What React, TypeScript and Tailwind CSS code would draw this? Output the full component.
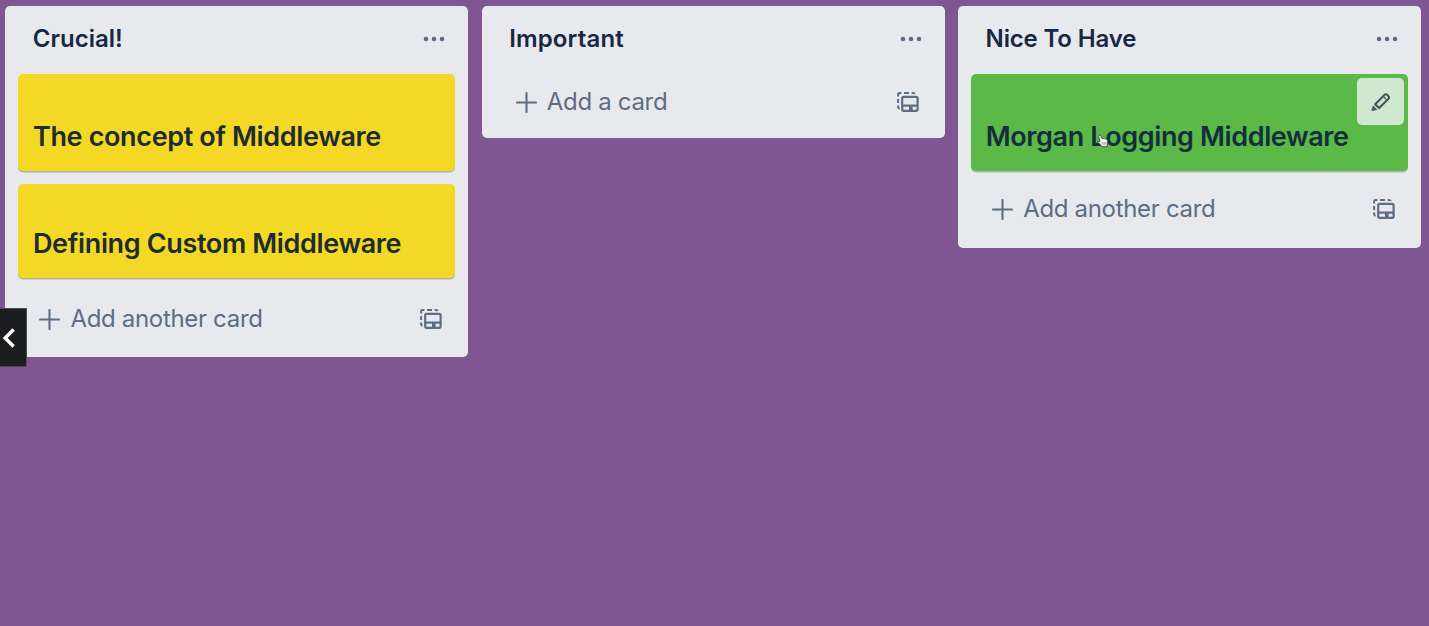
import type { ReactNode } from "react";

function Dots() {
  return (
    <svg width="22" height="6" viewBox="0 0 22 6" fill="#5e6c84" aria-hidden="true">
      <circle cx="3" cy="3" r="2.3" />
      <circle cx="11" cy="3" r="2.3" />
      <circle cx="19" cy="3" r="2.3" />
    </svg>
  );
}

function TemplateIcon() {
  return (
    <svg width="22" height="20" viewBox="0 0 22 20" fill="none" stroke="#5e6c84" aria-hidden="true">
      <path
        d="M1.1 4.4V2.4Q1.1 1 2.5 1H4.4 M7 1H12 M14.6 1H16Q17.4 1 17.8 2 M1.1 7V11 M1.1 13.6V15Q1.1 16.5 2.6 16.8"
        strokeWidth="2"
      />
      <rect x="5.2" y="4.8" width="15.4" height="14" rx="1.5" strokeWidth="2.2" />
      <path d="M5 13.6H20.4" strokeWidth="2.2" />
      <path d="M12 16H15.6" strokeWidth="4" />
    </svg>
  );
}

function PencilIcon() {
  return (
    <svg width="20" height="20" viewBox="0 0 20 20" fill="none" stroke="#42595a" strokeWidth="2.1" strokeLinejoin="round" aria-hidden="true">
      <path d="M4.2 12.2L13.4 3Q14.9 1.5 16.4 3L17.3 3.9Q18.8 5.4 17.3 6.9L8.1 16.1Z" />
      <path d="M12.8 5L15.2 7.4" strokeWidth="1.3" />
      <path d="M2.2 13.9L5.8 17.5L1.8 18.6Q0.7 18.8 0.9 17.8Z" fill="#42595a" strokeWidth="0.8" />
    </svg>
  );
}

function HandCursor() {
  return (
    <svg className="absolute left-[126px] top-[60px]" width="12" height="14" viewBox="0 0 12 14" aria-hidden="true">
      <path
        d="M2 1.4Q3.2.3 4 1.8L5 4.4Q6 3.6 6.8 4.7Q7.8 3.9 8.6 5Q10.2 4.7 10.4 6.3L10.7 9.3L9.9 12.7H4.6L3.5 10.6L.9 8.4Q.3 7 2.2 7.2L3 7.6L1.7 2.8Q1.4 2 2 1.4Z"
        fill="#f4f4f4"
        stroke="#3c4a40"
        strokeWidth="0.9"
      />
      <path d="M5.6 8.1V10.7M7.2 8.1V10.7M8.8 8.1V10.7" stroke="#777" strokeWidth="0.7" />
    </svg>
  );
}

function List({ title, tracking, className, children }: { title: string; tracking: string; className: string; children: ReactNode }) {
  return (
    <section className={`flex w-[463px] shrink-0 flex-col rounded-[5px] bg-[#e7e9ed] px-[13px] ${className}`}>
      <header className="flex h-[68px] shrink-0 items-center justify-between pr-[10px] pb-[2px] pl-[14.4px]">
        <h2 className={`text-[24px] leading-[30px] font-semibold text-[#172845] ${tracking}`}>{title}</h2>
        <button aria-label="List actions" className="pb-px">
          <Dots />
        </button>
      </header>
      {children}
    </section>
  );
}

function Card({ text, className, children }: { text: string; className: string; children?: ReactNode }) {
  return (
    <article className={`relative shrink-0 rounded-[5px] px-[14.6px] text-[27px] leading-[34px] font-semibold whitespace-nowrap shadow-[0_1.5px_0_#adb3b4] ${className}`}>
      {text}
      {children}
    </article>
  );
}

function AddCard({ label, className }: { label: string; className: string }) {
  return (
    <div className={`flex items-center justify-between pr-[13px] pl-[21px] text-[#5e6c84] ${className}`}>
      <button className="flex items-center gap-[10px]">
        <svg width="21" height="21" viewBox="0 0 21 21" stroke="currentColor" strokeWidth="2.1" strokeLinecap="round" aria-hidden="true">
          <path d="M10.5 1V20M1 10.5H20" />
        </svg>
        <span className="text-[24px] leading-[30px] tracking-[-0.32px] whitespace-nowrap">{label}</span>
      </button>
      <button aria-label="Create from template" className="pb-px">
        <TemplateIcon />
      </button>
    </div>
  );
}

export default function App() {
  return (
    <main className="relative h-[626px] w-full overflow-hidden bg-[#7f5692] font-['Inter',sans-serif]">
      <div className="flex items-start gap-[13.4px] pt-[6px] pl-[5.4px]">
        <List title="Crucial!" tracking="tracking-[0px]" className="h-[351px]">
          <Card text="The concept of Middleware" className="h-[97px] bg-[#f3d926] pt-[46px] tracking-[-0.36px] text-[#1e2c2e]" />
          <Card text="Defining Custom Middleware" className="mt-[13px] h-[94px] bg-[#f3d926] pt-[43px] tracking-[-0.36px] text-[#1e2c2e]" />
          <AddCard label="Add another card" className="mt-[26px]" />
        </List>
        <List title="Important" tracking="tracking-[0.15px]" className="h-[132px]">
          <AddCard label="Add a card" className="mt-[13px]" />
        </List>
        <List title="Nice To Have" tracking="tracking-[-0.15px]" className="h-[242px]">
          <Card text="Morgan Logging Middleware" className="h-[97px] bg-[#5ab947] pt-[46px] tracking-[-0.38px] text-[#142f3b]">
            <button aria-label="Edit card" className="absolute top-[4px] right-[4px] flex size-[47px] items-center justify-center rounded-[5px] bg-[#d0e7d0]">
              <PencilIcon />
            </button>
            <HandCursor />
          </Card>
          <AddCard label="Add another card" className="mt-[23px]" />
        </List>
      </div>
      <button aria-label="Previous" className="absolute top-[308px] left-0 flex h-[59px] w-[27px] items-center border border-l-0 border-[#4c4d50] bg-[#1c1d1f] pl-[2px]">
        <svg width="14" height="20" viewBox="0 0 14 20" fill="none" stroke="#fff" strokeWidth="3.5" aria-hidden="true">
          <path d="M11.6 1.6L3.2 10L11.6 18.4" />
        </svg>
      </button>
    </main>
  );
}
